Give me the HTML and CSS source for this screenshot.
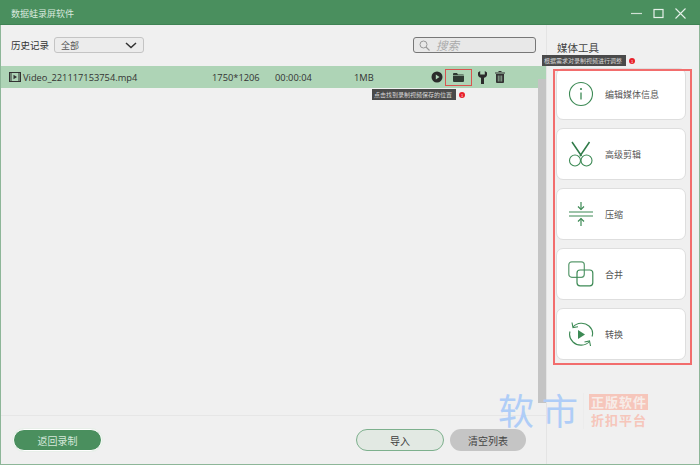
FILE: index.html
```html
<!DOCTYPE html>
<html lang="zh">
<head>
<meta charset="utf-8">
<title>数据蛙录屏软件</title>
<link rel="stylesheet" href="styles.css">
</head>
<body>
<div class="window">
  <header class="titlebar">
    <span class="app-title">数据蛙录屏软件</span>
    <div class="win-controls">
      <svg width="11" height="11" viewBox="0 0 11 11"><path d="M0 5.500h11" stroke="#cfe0d4" stroke-width="1.200"/></svg>
      <svg width="11" height="11" viewBox="0 0 11 11"><rect x="1" y="1.500" width="9" height="8" fill="none" stroke="#e6f0e9" stroke-width="1.200"/></svg>
      <svg width="11" height="11" viewBox="0 0 11 11"><path d="M.5.5l10 10M10.500.5l-10 10" stroke="#e6f0e9" stroke-width="1.100"/></svg>
    </div>
  </header>
  <div class="body">
    <main class="main">
      <div class="toolbar">
        <div class="filter">
          <span class="filter-label">历史记录</span>
          <div class="select">
            <span>全部</span>
            <svg width="12" height="7" viewBox="0 0 12 7"><path d="M1 1l5 4.500 5-4.500" fill="none" stroke="#333" stroke-width="1.500"/></svg>
          </div>
        </div>
        <div class="search">
          <svg width="11" height="11" viewBox="0 0 11 11"><circle cx="4.500" cy="4.500" r="3.500" fill="none" stroke="#999" stroke-width="1"/><path d="M7 7l3.500 3.500" stroke="#999" stroke-width="1.100"/></svg>
          <span class="search-text">搜索</span>
        </div>
      </div>
      <div class="list">
        <div class="row">
          <div class="cell-name">
            <svg width="12" height="10" viewBox="0 0 12 10"><rect x=".5" y=".5" width="11" height="9" fill="none" stroke="#333"/><path d="M2 .5v9M10 .5v9" stroke="#333"/><path d="M4.500 2.800v4.400L8 5z" fill="#333"/></svg>
            <span>Video_221117153754.mp4</span>
          </div>
          <span class="cell-res">1750*1206</span>
          <span class="cell-time">00:00:04</span>
          <span class="cell-size">1MB</span>
          <div class="cell-actions">
            <svg class="act-play" width="12" height="12" viewBox="0 0 12 12"><circle cx="6" cy="6" r="5.500" fill="#2b2b2b"/><path d="M4.800 3.500v5L8.500 6z" fill="#b0d5b8"/></svg>
            <span class="act-folder">
              <svg width="11" height="9" viewBox="0 0 11 9"><path d="M0 1a1 1 0 0 1 1-1h3l1 1.500h5a1 1 0 0 1 1 1V8a1 1 0 0 1-1 1H1a1 1 0 0 1-1-1z" fill="#2f3a33"/><path d="M0 2.500h11" stroke="#b0d5b8" stroke-width=".6"/></svg>
            </span>
            <svg class="act-wrench" width="9" height="13" viewBox="0 0 9 13"><path d="M0 1.500L2.200 0v3.500h4.600V0L9 1.500v2.300C9 5.500 7.500 6.500 6 6.800V13H3V6.800C1.500 6.500 0 5.500 0 3.800z" fill="#2b2b2b"/></svg>
            <svg class="act-trash" width="10" height="12" viewBox="0 0 10 12"><path d="M3.500.5h3M0 2h10" stroke="#333" stroke-width="1"/><path d="M1 3h8v8a1 1 0 0 1-1 1H2a1 1 0 0 1-1-1z" fill="#333"/><path d="M3.300 4.500v6M5 4.500v6M6.700 4.500v6" stroke="#b0d5b8" stroke-width=".7"/></svg>
          </div>
        </div>
        <div class="scrollbar"></div>
      </div>
      <footer class="footer">
        <button class="btn btn-primary">返回录制</button>
        <div class="footer-right">
          <button class="btn btn-outline">导入</button>
          <button class="btn btn-grey">清空列表</button>
        </div>
      </footer>
    </main>
    <aside class="side">
      <h2 class="side-title">媒体工具</h2>
      <div class="tools">
        <div class="card">
          <svg class="card-icon" width="26" height="26" viewBox="0 0 26 26"><circle cx="13" cy="13" r="11.500" fill="none" stroke="#3d8a55" stroke-width="1.100"/><circle cx="13" cy="8" r="1.100" fill="#3d8a55"/><path d="M13 11.500v7" stroke="#3d8a55" stroke-width="1.300"/></svg>
          <span>编辑媒体信息</span>
        </div>
        <div class="card">
          <svg class="card-icon" width="26" height="26" viewBox="0 0 26 26"><circle cx="7" cy="19.500" r="5.500" fill="none" stroke="#3d8a55" stroke-width="1.100"/><circle cx="18.500" cy="19.500" r="5.500" fill="none" stroke="#3d8a55" stroke-width="1.100"/><path d="M4 1l9.500 14M21.500 1L12 15" stroke="#2f7a48" stroke-width="1.500"/></svg>
          <span>高级剪辑</span>
        </div>
        <div class="card">
          <svg class="card-icon" width="26" height="26" viewBox="0 0 26 26"><path d="M1 11h24M1 15h24M13 1v7.500M13 25v-7.500" stroke="#3d8a55" stroke-width="1.200"/><path d="M10 5.500l3 3 3-3M10 20.500l3-3 3 3" fill="none" stroke="#3d8a55" stroke-width="1.200"/></svg>
          <span>压缩</span>
        </div>
        <div class="card">
          <svg class="card-icon" width="26" height="26" viewBox="0 0 26 26"><rect x=".8" y=".8" width="15.500" height="15.500" rx="3" fill="none" stroke="#5a9a6e" stroke-width="1.200"/><rect x="9" y="9" width="15.800" height="15.800" rx="3" fill="none" stroke="#3d8a55" stroke-width="1.200"/></svg>
          <span>合并</span>
        </div>
        <div class="card">
          <svg class="card-icon" width="26" height="26" viewBox="0 0 26 26"><path d="M5 6C9 1.500 16.500 1 21 5c3.300 3 4.300 7 3 10.500M21.500 20.500C17.500 25 9.500 25.500 5 21 2 18 1 14 2 10.500" fill="none" stroke="#3d8a55" stroke-width="1.100"/><path d="M4 1.500l1 5 5-.8M22.500 25l-1-5-5 1" fill="none" stroke="#3d8a55" stroke-width="1.100"/><path d="M10 9v9l7-4.500z" fill="#3d8a55"/></svg>
          <span>转换</span>
        </div>
      </div>
    </aside>
  </div>

  <div class="tip tip-folder"><span class="tip-box">点击找到录制视频保存的位置</span><i class="tip-dot">1</i></div>
  <div class="tip tip-tools"><span class="tip-box">根据需求对录制视频进行调整</span><i class="tip-dot">1</i></div>
  <div class="mark-red-box"></div>
  <div class="watermark">
    <span class="wm-blue">软</span><span class="wm-blue wm-second">市</span>
    <div class="wm-sep"></div>
    <div class="wm-red">
      <span class="wm-solid">正版软件</span>
      <span class="wm-plain">折扣平台</span>
    </div>
  </div>
</div>
</body>
</html>
```
FILE: styles.css
```css
* { box-sizing: border-box; }
html, body { margin: 0; padding: 0; }
body {
  width: 700px;
  height: 465px;
  overflow: hidden;
  font-family: "Noto Sans CJK SC", "Liberation Sans", sans-serif;
  color: #333;
}
.window {
  position: relative;
  width: 700px;
  height: 465px;
  display: flex;
  flex-direction: column;
  background: #f0f0f0;
  border: 1px solid #8db698;
  border-top: 0;
}
.titlebar {
  height: 25px;
  flex: none;
  margin: 0 -1px;
  padding: 2px 14px 0 11px;
  display: flex;
  align-items: center;
  justify-content: space-between;
  background: #4a8f5e;
  border-bottom: 1px solid #3f8354;
}
.app-title { font-size: 9px; color: #d9e9de; }
.win-controls { display: flex; gap: 11px; align-items: center; }
.body { flex: 1; display: flex; min-height: 0; }
.main { width: 545px; flex: none; display: flex; flex-direction: column; }
.toolbar {
  height: 41px;
  flex: none;
  padding: 0 10px 1px 10px;
  display: flex;
  align-items: center;
  justify-content: space-between;
}
.filter { display: flex; align-items: center; gap: 5px; }
.filter-label { font-size: 9.500px; width: 38px; white-space: nowrap; }
.select {
  width: 90px;
  height: 16px;
  padding: 0 6px;
  display: flex;
  align-items: center;
  justify-content: space-between;
  font-size: 9px;
  color: #555;
  background: #ececec;
  border: 1px solid #c4c4c4;
  border-radius: 3px;
}
.search {
  width: 123px;
  height: 16px;
  padding: 0 5px;
  display: flex;
  align-items: center;
  gap: 6px;
  background: #e8e8e8;
  border: 1px solid #777;
  border-radius: 3px;
}
.search-text { font-size: 11.500px; line-height: 14px; font-style: italic; color: #aaa; }
.list { flex: 1; position: relative; min-height: 0; }
.row {
  height: 22px;
  display: flex;
  align-items: center;
  background: #aed4b6;
  font-family: "Open Sans", "Noto Sans CJK SC", sans-serif;
  font-size: 9.300px;
  color: #333;
}
.cell-name { width: 211px; padding-left: 8px; display: flex; align-items: center; gap: 2px; }
.cell-res { width: 63px; }
.cell-time { width: 79px; }
.cell-size { width: 77px; }
.cell-actions { display: flex; align-items: center; }
.act-folder {
  width: 27px;
  height: 17px;
  margin: 0 6px 0 2px;
  padding-top: 1px;
  display: flex;
  align-items: center;
  justify-content: center;
  border: 1px solid #d9534f;
}
.act-wrench { margin-right: 8px; }
.scrollbar {
  position: absolute;
  right: 0;
  top: 13px;
  width: 8px;
  height: 324px;
  background: #c4c4c4;
}
.footer {
  height: 49px;
  flex: none;
  padding: 0 20px 0 12px;
  display: flex;
  align-items: center;
  justify-content: space-between;
  border-top: 1px solid #e6e6e6;
}
.footer-right { display: flex; gap: 6px; }
.btn {
  height: 22px;
  padding: 0;
  font-family: inherit;
  font-size: 10px;
  border-radius: 11px;
  display: block;
}
.btn-primary { width: 89px; background: #4a8f5e; color: #d5e7da; border: 1px solid #fff; box-shadow: 0 0 0 1px #e8efe9; }
.btn-outline { width: 88px; background: #e2e9e3; color: #3c3c3c; border: 1px solid #7db08d; }
.btn-grey { width: 76px; background: #c5c5c5; color: #444; border: 0; }
.side {
  flex: 1;
  padding: 12px 13px 0 9px;
  border-left: 1px solid #e4e4e4;
}
.side-title {
  margin: 0 0 10px 1px;
  font-size: 10.500px;
  font-weight: 400;
  line-height: 21px;
  color: #444;
}
.tools { display: flex; flex-direction: column; gap: 8px; }
.card {
  height: 52px;
  padding-left: 11px;
  display: flex;
  align-items: center;
  gap: 11px;
  background: #fff;
  border: 1px solid #dedede;
  border-radius: 7px;
  font-size: 9px;
  color: #555;
}
.card-icon { flex: none; }
.tip { position: absolute; display: flex; align-items: center; gap: 3px; }
.tip-folder { left: 371px; top: 89px; }
.tip-tools { left: 541px; top: 55px; }
.tip-box {
  width: 84px;
  height: 11px;
  padding: 0 2px;
  display: block;
  overflow: hidden;
  line-height: 11px;
  font-size: 6px;
  white-space: nowrap;
  color: #d8d8d8;
  background: #4a4a4a;
}
.tip-dot {
  width: 6px;
  height: 6px;
  border-radius: 50%;
  background: #e8202a;
  color: #fff;
  font-size: 4px;
  font-style: normal;
  line-height: 6px;
  text-align: center;
}
.mark-red-box {
  position: absolute;
  left: 552px;
  top: 69px;
  width: 139px;
  height: 296px;
  border: 2px solid #f26d6d;
  pointer-events: none;
}
.watermark {
  position: absolute;
  left: 497px;
  top: 385px;
  display: flex;
  align-items: flex-start;
  color: #a9c9f5;
}
.wm-blue { font-size: 36px; line-height: 48px; color: #afcdf7; }
.wm-second { margin-left: 8px; }
.wm-sep { width: 1px; height: 36px; margin: 8px 5px 0 5px; background: #ececec; }
.wm-red { margin-top: 9px; display: flex; flex-direction: column; gap: 2px; font-size: 13px; line-height: 16px; letter-spacing: 1px; font-weight: 700; white-space: nowrap; }
.wm-solid { background: #f6c6bb; color: #f7ece8; padding: 0 1px 0 2px; }
.wm-plain { color: #f6c6bb; padding-left: 2px; }
```
